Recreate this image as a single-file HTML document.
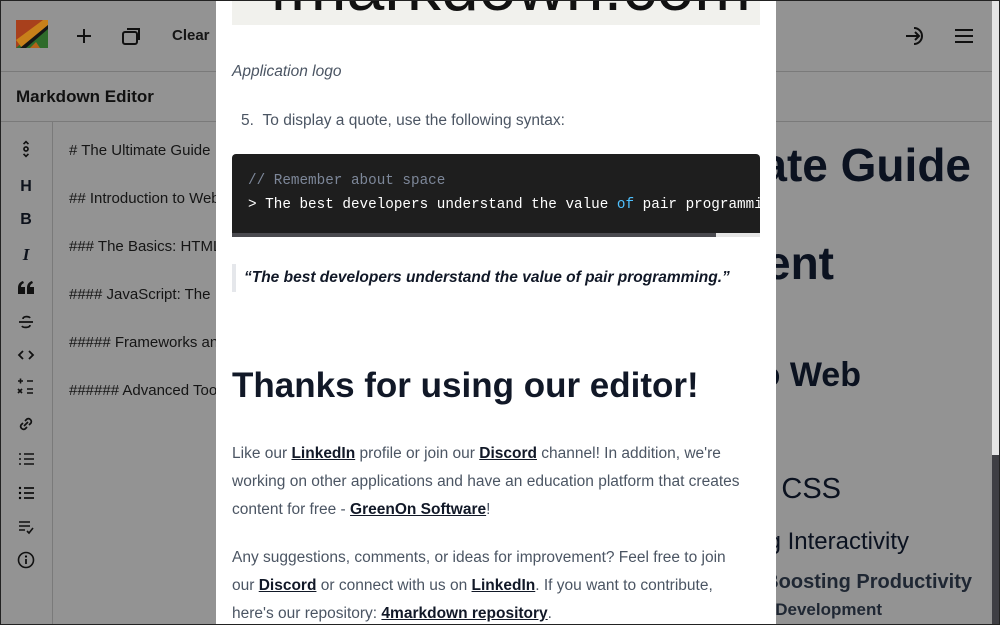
<!DOCTYPE html>
<html><head><meta charset="utf-8"><style>
*{margin:0;padding:0;box-sizing:border-box}
body{width:1000px;height:625px;overflow:hidden;position:relative;background:#939393;font-family:"Liberation Sans","DejaVu Sans",sans-serif;color:#0d121c}
.frame{position:absolute;inset:0;border:1px solid #222;z-index:50;pointer-events:none}
.top{position:absolute;left:0;top:0;width:1000px;height:72px;border-bottom:1px solid #7a7a7a}
.sub{position:absolute;left:0;top:72px;width:1000px;height:50px;border-bottom:1px solid #7a7a7a}
.side{position:absolute;left:0;top:122px;width:53px;height:503px;border-right:1px solid #7a7a7a}
.ic{position:absolute;left:17px;width:18px;height:18px}
.ln{position:absolute;left:69px;font-size:15px;color:#151515;white-space:nowrap}
.pv{position:absolute;font-weight:bold;color:#0b1220;white-space:nowrap}
.modal{position:absolute;left:216px;top:0;width:560px;height:625px;background:#fff;z-index:10;overflow:hidden;color:#4b5563;font-size:15.5px}
.modal a{color:#111827;font-weight:bold;text-decoration:underline}
.p{position:absolute;left:16px;width:535px;line-height:28px;white-space:nowrap}
</style></head><body>
<div class="top">
 <svg style="position:absolute;left:16px;top:20px" width="32" height="28" viewBox="0 0 32 28"><rect width="32" height="28" fill="#2e6b2a"/><polygon points="0,0 32,0 0,28" fill="#a8401c"/><polygon points="0,20 6,28 32,5 32,0 27,0" fill="#c8801a"/><polygon points="4,28 10,28 32,9 32,5" fill="#151515"/><polygon points="14,28 24,28 20,22" fill="#b46219"/></svg>
 <svg style="position:absolute;left:75px;top:27px" width="18" height="18" viewBox="0 0 18 18"><path d="M9 2v14M2 9h14" stroke="#111" stroke-width="2"/></svg>
 <svg style="position:absolute;left:121px;top:26px" width="22" height="20" viewBox="0 0 22 20"><rect x="2" y="6" width="14" height="12" rx="2" fill="none" stroke="#111" stroke-width="2"/><path d="M6 3h12v11" fill="none" stroke="#111" stroke-width="2"/></svg>
 <div style="position:absolute;left:172px;top:27px;font-size:15px;font-weight:bold;color:#151515">Clear</div>
 <svg style="position:absolute;left:904px;top:25px" width="24" height="22" viewBox="0 0 24 22"><path d="M10 3a8 8 0 1 1 0 16" fill="none" stroke="#111" stroke-width="2"/><path d="M2 11h13M11 7l4 4-4 4" fill="none" stroke="#111" stroke-width="2"/></svg>
 <svg style="position:absolute;left:955px;top:28px" width="18" height="16" viewBox="0 0 18 16"><path d="M0 2h18M0 8h18M0 14h18" stroke="#111" stroke-width="2"/></svg>
</div>
<div class="sub"><div style="position:absolute;left:16px;top:15px;font-size:17px;font-weight:bold;color:#111">Markdown Editor</div></div>
<div class="side">
 <svg class="ic" style="top:18px" viewBox="0 0 18 22"><path d="M6 5l3-3 3 3M6 17l3 3 3-3" fill="none" stroke="#111" stroke-width="2"/><circle cx="9" cy="11" r="2.5" fill="none" stroke="#111" stroke-width="2"/></svg>
 <div class="ic" style="top:56px;font-weight:bold;font-size:16px;text-align:center">H</div>
 <div class="ic" style="top:89px;font-weight:bold;font-size:16px;text-align:center">B</div>
 <div class="ic" style="top:123px;font-weight:bold;font-style:italic;font-size:17px;text-align:center;font-family:'Liberation Serif',serif">I</div>
 <svg class="ic" style="top:157px" viewBox="0 0 18 18"><path d="M1 15v-6c0-4 2-6 5-7l1 2c-2 1-3 2-3 4h4v7zM10 15v-6c0-4 2-6 5-7l1 2c-2 1-3 2-3 4h4v7z" fill="#111"/></svg>
 <svg class="ic" style="top:191px" viewBox="0 0 18 18"><path d="M13 5c-1-2-7-2-7 1M5 13c1 2 8 2 8-1M2 9h14" fill="none" stroke="#111" stroke-width="1.7"/></svg>
 <svg class="ic" style="top:224px" viewBox="0 0 18 18"><path d="M6 5l-4 4 4 4M12 5l4 4-4 4" fill="none" stroke="#111" stroke-width="1.8"/></svg>
 <svg class="ic" style="top:256px" viewBox="0 0 18 18"><path d="M1 3h5M3.5 0.5v5M10 3h6M1 11l4 4M5 11l-4 4M10 11h6M10 15h6" stroke="#111" stroke-width="1.6"/></svg>
 <svg class="ic" style="top:293px" viewBox="0 0 18 18"><path d="M8 6l2-2a3 3 0 0 1 4 4l-2 2M10 12l-2 2a3 3 0 0 1-4-4l2-2M7 11l4-4" fill="none" stroke="#111" stroke-width="1.7"/></svg>
 <svg class="ic" style="top:328px" viewBox="0 0 18 18"><path d="M7 4h10M7 9h10M7 14h10M2 4h2M2 9h2M2 14h2" stroke="#111" stroke-width="1.6"/></svg>
 <svg class="ic" style="top:362px" viewBox="0 0 18 18"><path d="M7 4h10M7 9h10M7 14h10" stroke="#111" stroke-width="1.8"/><circle cx="3" cy="4" r="1.2"/><circle cx="3" cy="9" r="1.2"/><circle cx="3" cy="14" r="1.2"/></svg>
 <svg class="ic" style="top:396px" viewBox="0 0 18 18"><path d="M2 4h11M2 8h11M2 12h6M10 13l2 2 4-5" fill="none" stroke="#111" stroke-width="1.6"/></svg>
 <svg class="ic" style="top:429px" viewBox="0 0 18 18"><circle cx="9" cy="9" r="7.5" fill="none" stroke="#111" stroke-width="1.6"/><path d="M9 8v5" stroke="#111" stroke-width="1.8"/><circle cx="9" cy="5.5" r="1.1"/></svg>
</div>
<div class="ln" style="top:142px"># The Ultimate Guide</div>
<div class="ln" style="top:190px">## Introduction to Web</div>
<div class="ln" style="top:238px">### The Basics: HTML</div>
<div class="ln" style="top:286px">#### JavaScript: The</div>
<div class="ln" style="top:334px">##### Frameworks and</div>
<div class="ln" style="top:382px">###### Advanced Tools</div>
<div class="pv" style="right:29px;top:138px;font-size:46px">The Ultimate Guide</div>
<div class="pv" style="right:166px;top:236px;font-size:46px">Development</div>
<div class="pv" style="right:139px;top:356px;font-size:34px">Introduction to Web</div>
<div class="pv" style="right:159px;top:473px;font-size:29px;font-weight:normal">HTML &amp; CSS</div>
<div class="pv" style="right:91px;top:528px;font-size:24px;font-weight:normal">JavaScript: Adding Interactivity</div>
<div class="pv" style="right:28px;top:571px;font-size:20px;color:#1f2733">Frameworks: Boosting Productivity</div>
<div class="pv" style="right:118px;top:600px;font-size:17px;color:#1f2733">Web Development</div>
<div style="position:absolute;left:992px;top:0;width:7px;height:455px;background:#e5e5e5"></div>
<div style="position:absolute;left:992px;top:455px;width:7px;height:170px;background:#3f3f44"></div>
<div class="modal">
 <div style="position:absolute;left:16px;top:0;width:528px;height:25px;background:#f1f1ed;overflow:hidden"><div style="position:absolute;left:20px;top:-52px;font-size:68px;color:#111;white-space:nowrap">4markdown.com</div></div>
 <div class="p" style="top:58px;font-style:italic">Application logo</div>
 <div class="p" style="top:107px;left:25px">5.&nbsp;&nbsp;To display a quote, use the following syntax:</div>
 <div style="position:absolute;left:16px;top:154px;width:528px;height:83px;background:#1e1e1e;border-radius:4px 4px 0 0;font-family:'Liberation Mono','DejaVu Sans Mono',monospace;font-size:14.3px;white-space:nowrap;overflow:hidden">
  <div style="position:absolute;left:16px;top:19px;color:#7d8799">// Remember about space</div>
  <div style="position:absolute;left:16px;top:43px;color:#fff">&gt; The best developers understand the value <span style="color:#4fc1ff">of</span> pair programming.</div>
  <div style="position:absolute;left:0;top:79px;width:484px;height:4px;background:#4a4a4f"></div>
  <div style="position:absolute;left:484px;top:79px;width:44px;height:4px;background:#e5e5e5"></div>
 </div>
 <div style="position:absolute;left:16px;top:264px;width:4px;height:28px;background:#e5e7eb"></div>
 <div class="p" style="top:264px;left:28px;font-style:italic;font-weight:bold;color:#111827">“The best developers understand the value of pair programming.”</div>
 <div class="p" style="top:362px;font-size:35px;line-height:48px;font-weight:bold;color:#111827">Thanks for using our editor!</div>
 <div class="p" style="top:440px">Like our <a>LinkedIn</a> profile or join our <a>Discord</a> channel! In addition, we're<br>working on other applications and have an education platform that creates<br>content for free - <a>GreenOn Software</a>!</div>
 <div class="p" style="top:544px">Any suggestions, comments, or ideas for improvement? Feel free to join<br>our <a>Discord</a> or connect with us on <a>LinkedIn</a>. If you want to contribute,<br>here's our repository: <a>4markdown repository</a>.</div>
</div>
<div class="frame"></div>
</body></html>
